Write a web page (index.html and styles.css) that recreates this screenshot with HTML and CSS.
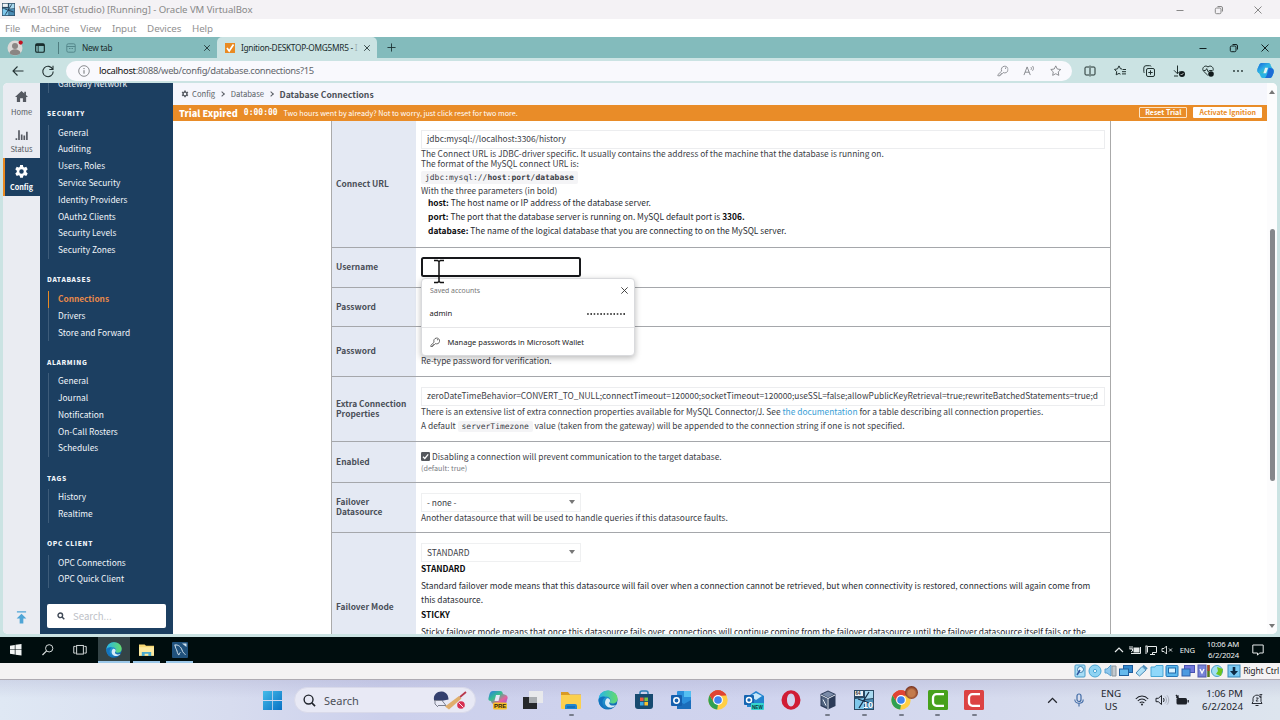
FILE: index.html
```html
<!DOCTYPE html>
<html lang="en">
<head>
<meta charset="utf-8">
<title>Win10LSBT (studio) [Running] - Oracle VM VirtualBox</title>
<link rel="stylesheet" href="styles.css">
</head>
<body>
<svg class="defs" aria-hidden="true">
  <defs>
    <linearGradient id="edgeA" x1="0" y1="0" x2="1" y2="1"><stop offset="0" stop-color="#2fb7e8"/><stop offset="1" stop-color="#0c59a4"/></linearGradient>
    <linearGradient id="edgeB" x1="0" y1="0" x2="1" y2="0"><stop offset="0" stop-color="#27b5e8"/><stop offset="1" stop-color="#66dc6b"/></linearGradient>
    <linearGradient id="cop" x1="0" y1="0" x2="1" y2="1"><stop offset="0" stop-color="#1664d8"/><stop offset=".5" stop-color="#2db0e6"/><stop offset="1" stop-color="#62cf66"/></linearGradient>
    <linearGradient id="copPre" x1="0" y1="0" x2="1" y2="1"><stop offset="0" stop-color="#2a7be4"/><stop offset=".4" stop-color="#37bf8e"/><stop offset=".7" stop-color="#e6629a"/><stop offset="1" stop-color="#8f55e0"/></linearGradient>
    <linearGradient id="win" x1="0" y1="0" x2="1" y2="1"><stop offset="0" stop-color="#44bce9"/><stop offset="1" stop-color="#0870c4"/></linearGradient>
    <symbol id="edge" viewBox="0 0 20 20">
      <circle cx="10" cy="10" r="9.6" fill="url(#edgeA)"/>
      <path d="M.6 9C1.200 3.800 5.200.4 10 .4c5.400 0 9.600 3.700 9.600 8 0 3-2.200 5-5 5-2 0-3-.8-2.600-1.700C13 10 12 6.500 8.300 6.500 4.800 6.500 1.500 7 .6 9z" fill="url(#edgeB)"/>
      <path d="M8.500 8.800c-2.800 3.200-1.500 8.200 3.200 8.800 2.600.2 4.800-.7 6.400-2.600-3 1.200-6 .5-6.800-1.300-.5-1.300 1-1.600.8-3.300-.2-1.500-2-2.900-3.600-1.600z" fill="#d9ecf7"/>
      <path d="M7.800 7.200C3.500 8.500 3 15.500 8.800 19.500 3.500 19 .2 14 .6 9.500 2 6.500 5 6 7.800 7.200z" fill="#1273bf"/>
    </symbol>
    <symbol id="chrome" viewBox="0 0 20 20">
      <circle cx="10" cy="10" r="9.700" fill="#ffcf45"/>
      <path d="M1.600 5.200A9.700 9.700 0 0 1 18.400 5.200H10z" fill="#e04434"/>
      <path d="M1.600 5.200 6 12.500 10 14.500 9.200 19.600A9.700 9.700 0 0 1 1.600 5.200z" fill="#2fa052"/>
      <path d="M1.600 5.200 6 12.500 9 6 18.400 5.200A9.700 9.700 0 0 0 1.600 5.200z" fill="#e04434"/>
      <circle cx="10" cy="10" r="4.900" fill="#fff"/><circle cx="10" cy="10" r="3.800" fill="#4084ee"/>
    </symbol>
    <symbol id="folder" viewBox="0 0 20 20">
      <path d="M0 2h7l2 2.500h11V8H0z" fill="#d99b24"/><path d="M0 5h20v13a1 1 0 0 1-1 1H1a1 1 0 0 1-1-1z" fill="#fbd04f"/>
      <path d="M4 19v-3a2 2 0 0 1 2-2h8a2 2 0 0 1 2 2v3z" fill="#1f86cf"/><path d="M6 17h8" stroke="#0b5aa0" stroke-width="1"/>
    </symbol>
    <symbol id="vm10" viewBox="0 0 20 20">
      <rect width="20" height="20" fill="#2b4a63"/><path d="M1 9 10 8v11H1z" fill="#7ec7ea"/><path d="M11 1h8v7l-8 1z" fill="#a9daf0"/><path d="M11 10l8-1v10h-8z" fill="#4a8db5"/>
      <rect x="1" y="1" width="8" height="5" fill="#eef2f5"/><path d="M5 18 15 2M4 9l14 5" stroke="#18304a" stroke-width="1.300"/>
    </symbol>
    <symbol id="dolphin" viewBox="0 0 16 16">
      <rect width="16" height="16" rx="1" fill="#20517c"/><path d="M2.500 3c4-.6 6.500 2 7.500 5 .8 2.500 2 3.500 3.500 4.500M3 3c.4 3.500 1.500 4 2 6s.8 3.500 2 4c0-2 .8-2.500 1.500-2.500" fill="none" stroke="#d4e4ee" stroke-width="1"/><path d="M10 1.500 14.500 5V1.500z" fill="#cfe2ee"/>
    </symbol>
    <symbol id="key" viewBox="0 0 12 12"><path d="M4.900 6.300 1 10v1.500h2V10.300h1.300V9h1.300l.9-1.100A3.500 3.500 0 1 0 4.900 6.300z" fill="none" stroke="currentColor" stroke-width=".8" stroke-linejoin="round"/><circle cx="8.900" cy="3.300" r=".6" fill="currentColor"/></symbol>
    <symbol id="x" viewBox="0 0 10 10"><path d="M1.500 1.500l7 7M8.500 1.500l-7 7" stroke="currentColor" fill="none" stroke-width="1"/></symbol>
    <symbol id="min" viewBox="0 0 10 10"><path d="M1.500 5.500h7" stroke="currentColor" stroke-width="1"/></symbol>
    <symbol id="restore" viewBox="0 0 10 10"><rect x="1.300" y="3" width="5.700" height="5.700" rx="1.300" fill="none" stroke="currentColor"/><path d="M3.500 1.500H7A1.500 1.500 0 0 1 8.500 3v3.500" fill="none" stroke="currentColor"/></symbol>
    <symbol id="gear" viewBox="0 0 16 16"><path fill="currentColor" fill-rule="evenodd" d="M6.500 1h3l.4 2.100 1.200.7 2-.8 1.500 2.600-1.600 1.500v1.500l1.600 1.500-1.500 2.600-2-.8-1.200.7-.4 2.100h-3l-.4-2.100-1.200-.7-2 .8-1.500-2.600L3 8.600V7.100L1.400 5.600 2.900 3l2 .8 1.200-.7zM8 5.500a2.400 2.400 0 1 0 0 4.800 2.400 2.400 0 0 0 0-4.800z"/></symbol>
    <symbol id="camt" viewBox="0 0 20 20"><rect width="20" height="20" rx="1.500" fill="currentColor"/><path d="M16 4.200H8.500A3.500 3.500 0 0 0 5 7.700v4.600a3.500 3.500 0 0 0 3.500 3.500H16" fill="none" stroke="#fff" stroke-width="2.300"/></symbol>
  </defs>
</svg>

<div class="screen">
  <header class="vb-title">
    <svg class="i14"><use href="#vm10"/></svg>
    <span class="vb-name">Win10LSBT (studio) [Running] - Oracle VM VirtualBox</span>
    <span class="vb-ctl"><svg><use href="#min"/></svg><svg><use href="#restore"/></svg><svg><use href="#x"/></svg></span>
  </header>
  <nav class="vb-menu"><span>File</span><span>Machine</span><span>View</span><span>Input</span><span>Devices</span><span>Help</span></nav>

  <div class="tabs">
    <div class="tabs-left">
      <svg class="avatar" viewBox="0 0 18 16"><circle cx="8" cy="8" r="7.500" fill="#dcd9d7"/><circle cx="8" cy="6" r="3" fill="#8a8583"/><path d="M2.500 13c1-5 10-5 11 0-2 3-9 3-11 0z" fill="#8a8583"/><circle cx="13.700" cy="2.600" r="2.100" fill="#c11322"/></svg>
      <svg class="wsp" viewBox="0 0 10 10"><rect x=".7" y=".7" width="8.600" height="8.600" rx="1.300" fill="none" stroke="#122" stroke-width="1.100"/><path d="M1 2h8" stroke="#122" stroke-width="1.800"/><path d="M3.200 3v6" stroke="#122" stroke-width=".8"/></svg>
      <i class="bar"></i>
    </div>
    <div class="tab"><svg class="i10" viewBox="0 0 10 10"><rect x=".8" y=".8" width="8.400" height="8.400" rx="1.500" fill="none" stroke="#54878b"/><path d="M.8 3.500h8.400M3 5.500h1.500M5.500 5.500H7" stroke="#54878b"/></svg><span>New tab</span><svg class="tx"><use href="#x"/></svg></div>
    <div class="tab on"><svg class="i10b" viewBox="0 0 10 10"><rect width="10" height="10" fill="#e98a22"/><path d="M2 5l2.200 3L8.500 1.500" fill="none" stroke="#fff" stroke-width="1.700"/></svg><span>Ignition-DESKTOP-OMG5MR5 - <em>I</em></span><svg class="tx"><use href="#x"/></svg></div>
    <svg class="plus" viewBox="0 0 10 10"><path d="M5 .5v9M.5 5h9" stroke="#1d3334"/></svg>
    <span class="win-ctl"><svg><use href="#min"/></svg><svg><use href="#restore"/></svg><svg><use href="#x"/></svg></span>
  </div>

  <div class="toolbar">
    <svg class="tb-back" viewBox="0 0 12 12"><path d="M11.500 6H1M5.500 1.500 1 6l4.500 4.500" fill="none" stroke="#243334" stroke-width="1.100"/></svg>
    <svg class="tb-reload" viewBox="0 0 12 12"><path d="M10.800 4.500A5.200 5.200 0 1 0 11.200 6.500M11 .8v3.700H7.300" fill="none" stroke="#243334" stroke-width="1.100"/></svg>
    <div class="address">
      <svg class="i12" viewBox="0 0 12 12"><circle cx="6" cy="6" r="5.300" fill="none" stroke="#6d7073" stroke-width=".8"/><path d="M6 5.200v3.500M6 3v1.100" stroke="#6d7073"/></svg>
      <span><b>localhost</b>:8088/web/config/database.connections?15</span>
      <div class="addr-icons">
        <svg viewBox="0 0 12 12"><use href="#key"/></svg>
        <svg viewBox="0 0 12 12"><path d="M1 10.500 4.300 2l3.300 8.500M2.200 7.500h4.200M8.200 2.200c.8.800.8 2 0 2.900M9.900 1c1.300 1.500 1.300 3.500 0 5" fill="none" stroke="currentColor" stroke-width=".85"/></svg>
        <svg viewBox="0 0 12 12"><path d="M6 .9l1.600 3.300 3.600.5-2.600 2.500.6 3.600L6 9.100l-3.200 1.700.6-3.600L.8 4.700l3.600-.5z" fill="none" stroke="currentColor" stroke-width=".85"/></svg>
      </div>
    </div>
    <div class="tb-icons">
      <svg viewBox="0 0 12 12"><path d="M5 2H2a1 1 0 0 0-1 1v6a1 1 0 0 0 1 1h3M7 2h3a1 1 0 0 1 1 1v6a1 1 0 0 1-1 1H7M6 .5v11" fill="none" stroke="currentColor"/></svg>
      <svg viewBox="0 0 12 12"><path d="M8 4 6.500 3.800 5 .9 3.500 3.900.5 4.400l2.200 2.200-.5 3.200L5 8.400l1.500.8M8.500 4.500H12M8 6.700h4M8 8.900h4" fill="none" stroke="currentColor"/></svg>
      <svg viewBox="0 0 12 12"><rect x="3.500" y="3.500" width="8" height="8" rx="1.500" fill="none" stroke="currentColor"/><path d="M1.500 8A2 2 0 0 1 .8 6.500V3A2.300 2.300 0 0 1 3 .7h3.700A2 2 0 0 1 8.300 1.500M7.500 5.300v4.400M5.300 7.500h4.400" fill="none" stroke="currentColor"/></svg>
      <svg viewBox="0 0 12 12"><path d="M4.500.5v8M1 5.300l3.500 3.500L7 6.300M1 11h4" fill="none" stroke="currentColor"/><circle cx="9" cy="9" r="3" fill="#101a1b"/><path d="M7.600 9l1 1L10.500 8" fill="none" stroke="#fff" stroke-width=".7"/></svg>
      <svg viewBox="0 0 12 12"><path d="M5.800 10.300 1.200 5.800C-.5 3 3.200-.7 6 2c2.800-2.700 6.500 1 4.800 3.800M1.500 5.500h2L4.700 3.600l1.500 3.200 1-1.300h3" fill="none" stroke="currentColor"/><circle cx="9" cy="9" r="2.800" fill="#101a1b"/></svg>
      <svg viewBox="0 0 12 12"><g fill="currentColor"><circle cx="2" cy="6" r=".9"/><circle cx="6" cy="6" r=".9"/><circle cx="10" cy="6" r=".9"/></g></svg>
    </div>
    <svg class="copilot" viewBox="0 0 16 16"><path d="M5 1h5.500c1.500 0 2 1 2.300 2L14.500 6c1.500 1 1.500 3 1 4.500l-1.200 3c-.5 1-1.300 1.500-2.300 1.500H5.500C4 15 3.500 14 3.200 13L2 10.500C.3 10 0 8 .6 6L2 3C2.700 1.500 3.500 1 5 1z" fill="#2bb3e4"/><path d="M5 1h5.500c1.500 0 2 1 2.300 2H10c-1.200 0-1.700.8-2 2L6.500 10.500H2C.3 10 0 8 .6 6L2 3C2.700 1.500 3.500 1 5 1z" fill="url(#cop)"/><path d="M11 5.500 9.600 11c-.4 1.500-1 2.500-2.100 4H12c1 0 1.800-.5 2.300-1.500l1.200-3c.5-1.500.5-3.500-1-4.500z" fill="#1c6cd6"/><path d="M7.600 5.300h2.800L8.600 10.500H6z" fill="#e4f3f4"/></svg>
  </div>

  <div class="viewport">
    <aside class="rail">
      <div class="rail-item"><svg viewBox="0 0 14 13"><path d="M7 .5 0 7h2v5.500h3.500v-4h3v4H12V7h2L11.800 5V1.500H10v1.800z" fill="#555961"/></svg><span>Home</span></div>
      <div class="rail-item"><svg viewBox="0 0 14 13"><path d="M1.500 12.500v-2M4.300 12.500V2M7.200 12.500V6.500M10 12.500V7.500M12.800 12.500V3.500" stroke="#555961" stroke-width="1.800" fill="none"/></svg><span>Status</span></div>
      <div class="rail-item on"><svg viewBox="0 0 16 16"><use href="#gear"/></svg><span>Config</span></div>
      <svg class="to-top" viewBox="0 0 12 14"><path d="M1 .8h10" stroke="#4fa5d6" stroke-width="1.500"/><path d="M6 2.800 11.300 8.200H8V13.500H4V8.200H.7z" fill="#4fa5d6"/></svg>
    </aside>
    <aside class="side">
      <div class="side-scroll">
        <ul class="first"><li>Gateway Network</li></ul>
        <h4>SECURITY</h4>
        <ul><li>General</li><li>Auditing</li><li>Users, Roles</li><li>Service Security</li><li>Identity Providers</li><li>OAuth2 Clients</li><li>Security Levels</li><li>Security Zones</li></ul>
        <h4>DATABASES</h4>
        <ul><li class="on">Connections</li><li>Drivers</li><li>Store and Forward</li></ul>
        <h4>ALARMING</h4>
        <ul><li>General</li><li>Journal</li><li>Notification</li><li>On-Call Rosters</li><li>Schedules</li></ul>
        <h4>TAGS</h4>
        <ul><li>History</li><li>Realtime</li></ul>
        <h4>OPC CLIENT</h4>
        <ul><li>OPC Connections</li><li>OPC Quick Client</li></ul>
      </div>
      <div class="side-search"><svg viewBox="0 0 8 8"><circle cx="3.300" cy="3.300" r="2.300" fill="none" stroke="#404a57" stroke-width="1.400"/><path d="M5 5l2.300 2.300" stroke="#404a57" stroke-width="1.500"/></svg><span>Search...</span></div>
    </aside>
    <main class="main">
      <div class="crumbs"><svg viewBox="0 0 16 16"><use href="#gear"/></svg><span>Config</span><i></i><span>Database</span><i></i><b>Database Connections</b></div>
      <div class="trial"><b class="t-exp">Trial Expired</b><b class="t-clock">0:00:00</b><span class="t-msg">Two hours went by already? Not to worry, just click reset for two more.</span><span class="btn ghost">Reset Trial</span><span class="btn">Activate Ignition</span></div>
      <div class="form">
        <div class="row r1"><div class="lab">Connect URL</div><div class="val">
          <div class="input wide">jdbc:mysql://localhost:3306/history</div>
          <p class="f1">The Connect URL is JDBC-driver specific. It usually contains the address of the machine that the database is running on.</p>
          <p>The format of the MySQL connect URL is:</p>
          <div class="codeline"><code>jdbc:mysql://<b>host</b>:<b>port</b>/<b>database</b></code></div>
          <p>With the three parameters (in bold)</p>
          <div class="dl"><div><b>host:</b> The host name or IP address of the database server.</div><div><b>port:</b> The port that the database server is running on. MySQL default port is <b>3306.</b></div><div><b>database:</b> The name of the logical database that you are connecting to on the MySQL server.</div></div>
        </div></div>
        <div class="row r2"><div class="lab">Username</div><div class="val">
          <div class="input focus"></div>
          <svg class="ibeam" viewBox="0 0 12 24"><path d="M1 1h3.500L6 2l1.500-1H11M6 2v20M1 23h3.500L6 22l1.500 1H11" fill="none" stroke="#111" stroke-width="1.500"/></svg>
          <div class="popup">
            <div class="pop-head"><span>Saved accounts</span><svg><use href="#x"/></svg></div>
            <div class="pop-acct"><span>admin</span><i class="dots"></i></div>
            <div class="pop-foot"><svg viewBox="0 0 12 12"><use href="#key"/></svg><span>Manage passwords in Microsoft Wallet</span></div>
          </div>
        </div></div>
        <div class="row r3"><div class="lab">Password</div><div class="val"></div></div>
        <div class="row r4"><div class="lab">Password</div><div class="val"><p class="retype">Re-type password for verification.</p></div></div>
        <div class="row r5"><div class="lab">Extra Connection Properties</div><div class="val">
          <div class="input wide extra">zeroDateTimeBehavior=CONVERT_TO_NULL;connectTimeout=120000;socketTimeout=120000;useSSL=false;allowPublicKeyRetrieval=true;rewriteBatchedStatements=true;d</div>
          <p class="l12">There is an extensive list of extra connection properties available for MySQL Connector/J. See <a>the documentation</a> for a table describing all connection properties.</p>
          <p class="l15">A default <code>serverTimezone</code> value (taken from the gateway) will be appended to the connection string if one is not specified.</p>
        </div></div>
        <div class="row r6"><div class="lab">Enabled</div><div class="val">
          <div class="check"><svg viewBox="0 0 9 9"><rect width="9" height="9" rx="1.200" fill="#55585d"/><path d="M2 4.700 3.800 6.500 7.200 2.400" fill="none" stroke="#fff" stroke-width="1.300"/></svg><span>Disabling a connection will prevent communication to the target database.</span></div>
          <small>(default: true)</small>
        </div></div>
        <div class="row r7"><div class="lab">Failover Datasource</div><div class="val">
          <div class="select"><span>- none -</span><i></i></div>
          <p class="l12">Another datasource that will be used to handle queries if this datasource faults.</p>
        </div></div>
        <div class="row r8"><div class="lab">Failover Mode</div><div class="val">
          <div class="select"><span>STANDARD</span><i></i></div>
          <div class="dl2"><b>STANDARD</b><div class="desc">Standard failover mode means that this datasource will fail over when a connection cannot be retrieved, but when connectivity is restored, connections will again come from<br>this datasource.</div><b>STICKY</b><div class="desc">Sticky failover mode means that once this datasource fails over, connections will continue coming from the failover datasource until the failover datasource itself fails or the</div></div>
        </div></div>
      </div>
    </main>
    <div class="scroll"><i class="up"></i><i class="thumb"></i><i class="down"></i></div>
  </div>

  <div class="tb10">
    <div class="c10"><svg viewBox="0 0 12 12"><path d="M0 1.700 5 1v4.700H0zM5.700.9 12 0v5.700H5.700zM0 6.300h5V11L0 10.300zM5.700 6.300H12V12l-6.300-.9z" fill="#f2f5f5"/></svg></div>
    <div class="c10"><svg viewBox="0 0 12 12"><circle cx="7.500" cy="4.500" r="3.800" fill="none" stroke="#dfe4e4"/><path d="M4.800 7.200.5 11.500" stroke="#dfe4e4" stroke-width="1.200"/></svg></div>
    <div class="c10"><svg class="tv" viewBox="0 0 14 12"><rect x="3.500" y="1.500" width="7" height="9" fill="none" stroke="#dfe4e4"/><path d="M2.500 2.500h-2v7h2M11.500 2.500h2v7h-2" fill="none" stroke="#dfe4e4"/></svg></div>
    <div class="c10 act"><svg class="big"><use href="#edge"/></svg></div>
    <div class="c10 run"><svg class="big f" viewBox="0 0 16 14"><path d="M0 1h6l1.500 1.500H16V13H0z" fill="#f6d774"/><path d="M0 4h16v9H0z" fill="#fce9a0"/><path d="M3 13.500V9h10v4.500h-3V11H6v2.500z" fill="#49aad0"/></svg></div>
    <div class="c10 run"><svg class="big"><use href="#dolphin"/></svg></div>
    <div class="tray10">
      <svg viewBox="0 0 12 12"><path d="M2 8l4-4 4 4" fill="none" stroke="#e6eaea" stroke-width="1.200"/></svg>
      <svg viewBox="0 0 12 12"><path d="M1 2v3M3 2v3M.5 5h3v2l-1.500 1" stroke="#e6eaea" fill="none"/><rect x="4.500" y="3.500" width="6" height="5" fill="#e6eaea"/><path d="M11.500 5v2M2 9.500h9.500V3" stroke="#e6eaea" fill="none"/></svg>
      <svg viewBox="0 0 12 12"><path d="M2.500 8.500V2.500h9v6h-4v2M5 10.500h5M.5 2h2M1 2v8" fill="none" stroke="#e6eaea"/></svg>
      <svg viewBox="0 0 12 12"><path d="M1 4.500h2L5.500 2v8L3 7.500H1zM8 4.500l3 3M11 4.500l-3 3" fill="none" stroke="#e6eaea" stroke-width=".9"/></svg>
      <span class="eng10">ENG</span>
      <span class="clk10">10:06 AM<br>6/2/2024</span>
      <svg class="note10" viewBox="0 0 12 12"><path d="M.8 1h10.400v8H7.500L5.500 11.200V9H.8z" fill="none" stroke="#e6eaea"/></svg>
    </div>
  </div>

  <div class="vb-status">
    <svg viewBox="0 0 14 14"><rect x="2" y="1" width="10" height="12" rx="1" fill="#a8ddf5" stroke="#4a9cc8"/><circle cx="7.500" cy="5.500" r="3" fill="#e8f7ff" stroke="#3c7fb0"/><path d="M7 6 4 11" stroke="#3056a0" stroke-width="1.500"/></svg>
    <svg viewBox="0 0 14 14"><circle cx="7" cy="7" r="6" fill="#8fd3f3" stroke="#4ba6d4"/><circle cx="7" cy="7" r="1.600" fill="#fff" stroke="#4ba6d4"/></svg>
    <svg viewBox="0 0 14 14"><path d="M1 5h2l4-4v11L3 9H1z" fill="#8fc8ee" stroke="#5a9fce"/><path d="M8 2h4v10H8z" fill="#c3c9ce" stroke="#8c959c"/></svg>
    <svg viewBox="0 0 14 14"><rect x="4.500" y="1.500" width="9" height="7" fill="#348bd0" stroke="#1e5d9e"/><rect x=".5" y="5" width="9" height="6.500" fill="#65b9ec" stroke="#215f9c"/></svg>
    <svg viewBox="0 0 14 14"><path d="M2 9 8 2.500 12 6 5.500 12z" fill="#aee0f7" stroke="#4b8bb8"/><path d="M9 1.500 13 5" stroke="#4b8bb8" stroke-width="2"/></svg>
    <svg viewBox="0 0 14 14"><path d="M1 3h4l1-1.500h7V12.500H1z" fill="#8fd8fa" stroke="#48a6d4"/></svg>
    <svg viewBox="0 0 14 14"><rect x="1" y="1.500" width="12" height="11" rx="1" fill="#5bb9ee" stroke="#2777b8"/><rect x="3.500" y="4" width="7" height="5" fill="#d8f2ff" stroke="#2169a8"/></svg>
    <svg viewBox="0 0 14 14"><rect x="3.500" y="1.500" width="10" height="7" fill="#7178db" stroke="#4850b0"/><rect x="1" y="5" width="8" height="7" fill="#4d9be0" stroke="#305fa8"/></svg>
    <svg viewBox="0 0 14 14"><rect x="2" y="1" width="8" height="12" fill="#7783d8" stroke="#5159ac"/><path d="M4 5l2 4 2-4" stroke="#fff" fill="none" stroke-width="1.300"/><path d="M12.500 1v12" stroke="#52791c" stroke-width="2.500"/><path d="M12.500 1v6" stroke="#b33d28" stroke-width="2"/></svg>
    <svg viewBox="0 0 14 14"><circle cx="6" cy="7" r="5.500" fill="#a2dff2" stroke="#4ca1c8"/><path d="M6 3l6 2-2 7-5-2 2-3z" fill="#6bc51f"/></svg>
    <svg viewBox="0 0 14 14"><rect x="1" y="1" width="12" height="12" fill="#79c9f3" stroke="#3b87b8"/><path d="M5.700 3h2.600v4H11l-4 4.500L3 7h2.700z" fill="#0e2a44"/></svg>
    <span>Right Ctrl</span>
  </div>

  <footer class="tb11">
    <svg class="start" viewBox="0 0 20 20"><path d="M0 0h9.600v9.600H0zM10.400 0H20v9.600h-9.600zM0 10.400h9.600V20H0zM10.400 10.400H20V20h-9.600z" fill="url(#win)"/></svg>
    <div class="search11">
      <svg class="mag" viewBox="0 0 14 14"><circle cx="6" cy="6" r="4.800" fill="none" stroke="#20242c" stroke-width="1.500"/><path d="M9.500 9.500 13 13" stroke="#20242c" stroke-width="1.700"/></svg>
      <span>Search</span>
      <svg class="cricket" viewBox="0 0 36 20"><path d="M2 10C1 4 6 1 10 1.500c4.500.5 6.500 4 6.500 8L9 11z" fill="#34406e"/><path d="M2 10.500h8l4 5H6M3 11v3l3 3" fill="none" stroke="#7d8190"/><path d="M13 16.500 27 6l2.500 2.500L17 19.500z" fill="#e0ae6d"/><path d="M28 7 34 2" stroke="#b8384b" stroke-width="1.800"/><circle cx="29" cy="15" r="3.800" fill="#d72f52"/><path d="M26.500 12.500l5 5" stroke="#fff" stroke-width=".9"/></svg>
    </div>
    <div class="apps">
      <div class="app"><svg viewBox="0 0 20 20"><path d="M5 1h7c2 0 2.500 1 3 3l3 1c2 1 2 3 1 5l-1 4H6c-2 0-2.500-1-3-3-2-.3-3-1-2.500-3l1-4C2.300 2 3 1 5 1z" fill="url(#copPre)"/><path d="M8 5h4l-1.500 6h-4z" fill="#e6e8f6"/><rect x="5" y="12.500" width="14" height="7" rx="1.500" fill="#f6c12c"/><text x="6" y="18.200" class="pre">PRE</text></svg></div>
      <div class="app back"><svg viewBox="0 0 20 20"><rect x="6" y="1" width="14" height="12" fill="#e8e9ec"/><rect x="0" y="7" width="14" height="12" fill="#26282b"/><rect x="6" y="7" width="8" height="6" fill="#aaaeb2"/></svg></div>
      <div class="app run"><svg><use href="#folder"/></svg></div>
      <div class="app"><svg><use href="#edge"/></svg></div>
      <div class="app"><svg viewBox="0 0 20 20"><path d="M6 5V3a2 2 0 0 1 2-2h4a2 2 0 0 1 2 2v2" fill="none" stroke="#2b7db5" stroke-width="1.500"/><path d="M1 4h18v12a3 3 0 0 1-3 3H4a3 3 0 0 1-3-3z" fill="#174a70"/><path d="M6 7.500h3.600v3.600H6z" fill="#ef5a3c"/><path d="M10.400 7.500H14v3.600h-3.600z" fill="#7dc243"/><path d="M6 11.900h3.600v3.600H6z" fill="#39a9e4"/><path d="M10.400 11.900H14v3.600h-3.600z" fill="#f9c22e"/></svg></div>
      <div class="app"><svg viewBox="0 0 20 20"><rect x="6" y="1" width="14" height="18" rx="1" fill="#2a8fdc"/><path d="M13 1h7v6h-7z" fill="#53bff2"/><path d="M6 10l7 4 7-4v9H6z" fill="#1b6dbb"/><rect y="5" width="11" height="11" rx="1" fill="#155fae"/><circle cx="5.500" cy="10.500" r="2.700" fill="none" stroke="#fff" stroke-width="1.500"/></svg></div>
      <div class="app"><svg><use href="#chrome"/></svg></div>
      <div class="app"><svg viewBox="0 0 20 20"><path d="M3 7 12 1l8 5v11H3z" fill="#2384cf"/><path d="M6 6l6-3 6 3-6 4z" fill="#c8e8fa"/><rect y="5" width="10" height="10" rx="1" fill="#1464b1"/><circle cx="5" cy="10" r="2.500" fill="none" stroke="#fff" stroke-width="1.500"/><rect x="7" y="13" width="13" height="7" rx="1" fill="#35d4cf"/><text x="8" y="18.500" class="new">NEW</text></svg></div>
      <div class="app"><svg viewBox="0 0 20 20"><path fill-rule="evenodd" d="M10 .3a9.500 9.700 0 1 0 0 19.400A9.500 9.700 0 0 0 10 .3zM10 3.600c2.400 0 4 2.800 4 6.400s-1.600 6.400-4 6.400S6 13.600 6 10s1.600-6.400 4-6.400z" fill="#d01d35"/></svg></div>
      <div class="app run"><svg viewBox="0 0 20 20"><path d="M10 .5 17.500 4v12L10 19.500 2.500 16V4z" fill="#2b3a57"/><path d="M10 1.500 16 4.300 10 7.500 4 4.300z" fill="#7a8ba8"/><path d="M3.500 6 9 9v8.500L3.500 15z" fill="#51637f"/><path d="M5 9.500l3 6M3 5l7 3.500L17 5M10 8.500V19" stroke="#e7edf5" stroke-width="1" fill="none"/></svg></div>
      <div class="app run"><svg viewBox="0 0 20 20"><use href="#vm10"/><text x="9" y="17.500" class="ten">10</text><text x="1.500" y="5.300" class="sf">64</text></svg></div>
      <div class="app run"><svg viewBox="0 0 20 20"><use href="#chrome"/></svg><i class="face"></i></div>
      <div class="app run green"><svg><use href="#camt"/></svg></div>
      <div class="app run red"><svg><use href="#camt"/></svg></div>
    </div>
    <div class="tray11">
      <svg class="chev" viewBox="0 0 12 12"><path d="M2 8l4-4 4 4" fill="none" stroke="#23262d" stroke-width="1.200"/></svg>
      <svg class="mic" viewBox="0 0 12 14"><rect x="4" y="1" width="4" height="7.500" rx="2" fill="none" stroke="#3f6aa5" stroke-width="1.200"/><path d="M1.800 6.500c0 5 8.400 5 8.400 0M6 10.500v3" fill="none" stroke="#3f6aa5" stroke-width="1.100"/></svg>
      <span class="eng11">ENG<br>US</span>
      <svg class="wifi" viewBox="0 0 14 12"><path d="M.8 5c3.500-4 8.900-4 12.400 0M2.800 7c2.400-2.600 6-2.600 8.400 0M4.700 9c1.300-1.400 3.300-1.400 4.600 0" fill="none" stroke="#1e2229" stroke-width="1.100"/><circle cx="7" cy="10.500" r="1" fill="#1e2229"/></svg>
      <svg class="spk" viewBox="0 0 14 12"><path d="M1 4.300h2.300L6.500 1.500v9L3.300 7.700H1zM8.300 4c1 1 1 3 0 4" fill="none" stroke="#1e2229"/><path d="M10 2.500c2 2 2 5 0 7M12 1.300c2.300 3 2.300 6.400 0 9.400" fill="none" stroke="#9aa0ac" stroke-width=".8"/></svg>
      <svg class="bat" viewBox="0 0 14 12"><rect x="1.500" y="4" width="10.500" height="6.500" rx="1.500" fill="#1e2229"/><path d="M13.200 6v2.500M1 1l3 4M3.500 1.500 1.500 4" stroke="#1e2229" stroke-width="1.300"/></svg>
      <span class="clk11">1:06 PM<br>6/2/2024</span>
      <svg class="bell" viewBox="0 0 12 14"><path d="M1 10.500h10l-1-2V5.500C9.500 1 2.500 1 2 5.500v3zM4.500 12.500h3" fill="none" stroke="#2a2e36"/><path d="M5 5h2.300L5 8h2.300M8.500 1.500h2.500L8.500 4H11" fill="none" stroke="#2a2e36" stroke-width=".9"/></svg>
    </div>
  </footer>
</div>
</body>
</html>
```

FILE: styles.css
```css
* { box-sizing: border-box; }
body { margin: 0; width: 1280px; height: 720px; overflow: hidden; font-family: "Noto Sans", "Open Sans", sans-serif; color: #333; }
svg { display: block; flex: none; overflow: visible; }
.defs { position: absolute; width: 0; height: 0; }
p, h4, ul { margin: 0; padding: 0; list-style: none; font-weight: normal; }
span, b { white-space: nowrap; }
.screen { display: flex; flex-direction: column; width: 1280px; height: 720px; background: #cbe3e3; }

.vb-title { height: 19px; background: #f4f2f5; display: flex; align-items: center; padding: 0 0 0 2px; color: #888; }
.i14 { width: 13px; height: 13px; }
.vb-name { margin-left: 4px; font-size: 9.600px; line-height: 18px; letter-spacing: -.06px; }
.vb-ctl { margin-left: auto; display: flex; gap: 29px; padding-right: 17px; color: #888; }
.vb-ctl svg, .win-ctl svg { width: 10px; height: 10px; }
.vb-menu { height: 18px; background: #fff; display: flex; padding-left: 5px; font-size: 9.800px; letter-spacing: -.1px; line-height: 19px; color: #919191; gap: 10.700px; }

.tabs { height: 21px; background: #83bbbc; display: flex; align-items: center; }
.tabs-left { width: 59px; display: flex; align-items: center; padding-left: 7px; }
.avatar { width: 18px; height: 16px; }
.wsp { width: 10px; height: 10px; margin-left: 10px; }
.bar { width: 1px; height: 12px; background: #4f7d80; margin-left: 13px; }
.tab { width: 158px; height: 21px; display: flex; align-items: center; padding-left: 7px; font-size: 8.300px; letter-spacing: -.28px; color: #1a2c2d; }
.tab span { margin-left: 6px; }
.tab .tx { width: 8px; height: 8px; margin-left: auto; margin-right: 6px; color: #142526; }
.i10, .i10b { width: 10px; height: 10px; }
.tab.on { width: 160px; background: #cbe3e3; border-radius: 5px 5px 0 0; padding-left: 8px; }
.tab.on em { font-style: normal; color: #9fb2b3; }
.plus { width: 9px; height: 9px; margin-left: 10px; }
.win-ctl { margin-left: auto; display: flex; gap: 21px; padding-right: 10px; color: #111f20; }

.toolbar { height: 25px; display: flex; align-items: center; }
.tb-back { width: 12px; height: 12px; margin-left: 12px; }
.tb-reload { width: 12px; height: 12px; margin-left: 18px; }
.address { width: 1006px; height: 20px; margin-left: 12px; border-radius: 10px; background: #f9f9fd; display: flex; align-items: center; padding-left: 12px; font-size: 9.400px; letter-spacing: -.33px; color: #63666b; }
.address b { font-weight: normal; color: #111; }
.address span { margin-left: 9px; }
.i12 { width: 12px; height: 12px; }
.addr-icons { margin-left: auto; display: flex; gap: 15px; padding-right: 11px; color: #75777c; }
.addr-icons svg { width: 11.500px; height: 11.500px; }
.tb-icons { display: flex; gap: 17.500px; margin-left: 12px; color: #20302f; }
.tb-icons svg { width: 12px; height: 12px; }
.copilot { width: 17px; height: 17px; margin-left: 13px; }

.viewport { height: 551px; margin: 0 3px; display: flex; background: #fff; border-radius: 5px; overflow: hidden; font-family: "Noto Sans CJK JP", "Noto Sans", sans-serif; }
.rail { width: 37px; background: #eaecf2; display: flex; flex-direction: column; font-size: 7.500px; color: #555961; }
.rail-item { height: 37.500px; display: flex; flex-direction: column; align-items: center; padding-top: 7px; }
.rail-item svg { width: 13px; height: 13px; }
.rail-item span { line-height: 10px; margin-top: 3.500px; }
.rail-item.on { background: #1c3f61; color: #fff; font-weight: bold; border-left: 2px solid #e98a22; padding-right: 2px; font-size: 7.200px; }
.rail-item.on svg { width: 15px; height: 15px; margin-top: -1px; margin-bottom: -1px; }
.to-top { width: 11px; height: 13px; margin: auto auto 10px 13px; }
.side { width: 133px; background: #1c3f61; color: #f1f5fa; display: flex; flex-direction: column; }
.side-scroll { height: 521px; padding-left: 7px; overflow: hidden; }
.side h4 { height: 12px; line-height: 11.500px; font-size: 6.600px; font-weight: 900; letter-spacing: .65px; margin-bottom: 4.500px; }
.side ul { margin: 0 0 15.400px 1px; border-left: 1px solid #3d5c7a; padding-left: 9px; font-size: 8.400px; font-weight: 400; }
.side ul.first { margin-top: -7px; }
.side li { height: 16.800px; line-height: 15.500px; }
.side li.on { color: #e8894a; font-weight: bold; font-size: 8.300px; position: relative; }
.side li.on::before { content: ""; position: absolute; left: -10px; top: 0; width: 1px; height: 17px; background: #e98a22; }
.side-search { margin: 0 7px; height: 24px; background: #fff; border-radius: 2px; display: flex; align-items: center; padding-left: 10px; gap: 8px; font-size: 9.600px; color: #bcc0c6; }
.side-search svg { width: 8px; height: 8px; }

.main { width: 1094px; display: flex; flex-direction: column; }
.crumbs { height: 22px; background: #f5f6fc; display: flex; align-items: center; padding-left: 8px; padding-bottom: 1px; font-size: 7.700px; color: #5a5e66; }
.crumbs svg { width: 8px; height: 8px; margin-right: 3px; }
.crumbs b { font-size: 8.600px; color: #4b4f57; }
.crumbs i { width: 4px; height: 4px; border: solid #5a5e66; border-width: 1px 1px 0 0; transform: rotate(45deg); margin: 0 7px 0 4.500px; }
.trial { height: 16px; background: #e98c28; color: #fff; display: flex; align-items: center; padding: 0 5px 1px 6px; }
.t-exp { font-size: 9.200px; font-weight: 900; }
.t-clock { font-family: "DejaVu Sans Mono", monospace; font-size: 8px; margin-left: 6px; }
.t-msg { font-size: 7.200px; margin-left: 6px; }
.btn { height: 11px; line-height: 10px; font-size: 7px; font-weight: bold; padding: 0 6px; background: #fff; color: #e98c28; border-radius: 1px; margin-left: 6px; }
.btn.ghost { margin-left: auto; background: none; color: #fff; border: 1px solid #fbe3c5; padding: 0 5px; line-height: 8.500px; }

.form { margin-left: 158px; width: 780px; height: 513px; overflow: hidden; border-left: 1px solid #aaa; border-right: 1px solid #aaa; font-size: 8.400px; color: #3c4046; }
.row { display: flex; border-bottom: 1px solid #a5a7ab; }
.row p, .dl div { white-space: nowrap; }
.lab { width: 84px; background: #e4e9f3; padding: 0 4px 3px; display: flex; align-items: center; font-weight: bold; font-size: 8.400px; line-height: 10px; color: #4a4f58; }
.val { width: 694px; padding-left: 5px; position: relative; }
.r1 { height: 127px; } .r2 { height: 40px; } .r3 { height: 39px; } .r4 { height: 50px; } .r5 { height: 65px; } .r6 { height: 41px; } .r7 { height: 50px; } .r8 { height: 150px; }
.r1 .val { padding-top: 9px; } .r2 .val { padding-top: 9px; } .r4 .val { padding-top: 28px; } .r5 .val { padding-top: 9.500px; } .r6 .val { padding-top: 7.500px; } .r7 .val, .r8 .val { padding-top: 9.500px; }
.input { border: 1px solid #ecedef; height: 19px; line-height: 15.500px; padding-left: 5px; white-space: nowrap; overflow: hidden; background: #fff; }
.input.wide { width: 684px; padding-right: 5px; }
.input.extra { padding-right: 0; }
.input.focus { width: 160px; height: 20px; border: 2px solid #17181b; border-radius: 2.500px; }
.row p { line-height: 10px; height: 10px; }
.row p.f1 { margin-top: -1px; }
.codeline { height: 17px; display: flex; align-items: center; padding-top: 1px; }
code { font-family: "DejaVu Sans Mono", monospace; font-size: 7.980px; background: #f4f4f6; border-radius: 2px; padding: 1px 4px; line-height: 11px; }
.dl { padding-left: 7px; }
.dl div { height: 14px; line-height: 14px; color: #2a2d33; }
.dl b, .dl2 b { color: #0c0c0e; }
.row p.l12 { height: 13px; line-height: 11px; }
.row p.l15 { height: 15px; line-height: 12px; }
a { color: #3ba0d6; }
.check { display: flex; align-items: center; gap: 2px; height: 13px; line-height: 13px; }
.check svg { width: 9px; height: 9px; margin-top: 1px; }
small { display: block; font-size: 7.200px; line-height: 11px; color: #777b82; }
.select { width: 160px; height: 19px; border: 1px solid #eff0f1; display: flex; align-items: center; justify-content: space-between; padding: 0 5px 1px; }
.select i { border: 3px solid transparent; border-top: 4px solid #777; border-bottom: 0; }
.dl2 { display: flex; flex-direction: column; }
.dl2 b { height: 12px; line-height: 12px; }
.desc { line-height: 14px; padding: 4px 0 2px; color: #2a2d33; white-space: nowrap; }
.ibeam { position: absolute; left: 17px; top: 11px; width: 12px; height: 25px; z-index: 3; }
.popup { position: absolute; left: 4.500px; top: 30px; width: 214px; height: 78px; background: #fff; border: 1px solid #d9dadd; border-radius: 4px; box-shadow: 0 2px 6px rgba(0,0,0,.28); z-index: 2; font-family: "Noto Sans", sans-serif; display: flex; flex-direction: column; color: #222; }
.pop-head { height: 23px; display: flex; align-items: center; justify-content: space-between; padding: 0 5px 0 8.500px; font-size: 6.900px; color: #777; }
.pop-head svg { width: 9px; height: 9px; color: #333; }
.pop-acct { height: 26px; display: flex; align-items: center; justify-content: space-between; padding: 0 8px 3px; font-size: 7.600px; border-bottom: 1px solid #e6e6e8; }
.dots { width: 39px; height: 2px; margin-top: 2px; background: radial-gradient(circle at 1px 1px, #444 .7px, transparent 1px) 0 0 / 3.300px 2px; }
.pop-foot { height: 27px; display: flex; align-items: center; gap: 8px; padding-left: 8px; font-size: 7.560px; }
.pop-foot svg { width: 10px; height: 10px; }

.scroll { width: 10px; display: flex; flex-direction: column; align-items: center; background: #fcfcfd; padding: 7px 0 6px; }
.scroll .up { border: 3px solid transparent; border-bottom: 4px solid #777; border-top: 0; }
.scroll .down { border: 3px solid transparent; border-top: 4px solid #777; border-bottom: 0; margin-top: auto; }
.scroll .thumb { width: 5px; height: 252px; margin-top: 135px; background: #85878b; border-radius: 3px; }

.tb10 { height: 26px; margin-top: 3px; background: #000d0e; display: flex; }
.c10 { width: 32px; display: flex; align-items: center; justify-content: center; }
.c10 svg { width: 11.500px; height: 11.500px; }
.c10 svg.tv { width: 14px; }
.c10 svg.big { width: 16px; height: 16px; }
.c10 svg.big.f { width: 15px; height: 14px; }
.c10.act { background: #344346; margin-left: 2px; border-bottom: 2px solid #9cc8ea; }
.c10.act svg { margin-top: 2px; }
.c10.run { width: 27px; margin: 0 3px; border-bottom: 2px solid #9cc8ea; }
.c10.run svg { margin-top: 2px; }
.tray10 { margin-left: auto; display: flex; align-items: center; gap: 4px; color: #eef2f2; font-size: 7.700px; letter-spacing: -.15px; padding-right: 16px; }
.tray10 svg { width: 12px; height: 12px; }
.eng10 { margin-left: 3px; }
.clk10 { width: 40px; text-align: right; line-height: 11.500px; }
.tray10 .note10 { margin-left: 9px; }

.vb-status { height: 17px; background: #f4f2f3; border-bottom: 1px solid #aeaab2; display: flex; align-items: center; justify-content: flex-end; gap: 1.400px; color: #222; font-size: 8.600px; letter-spacing: -.2px; padding-right: 1px; }
.vb-status svg { width: 14px; height: 14px; }
.vb-status span { margin-left: 1px; }

.tb11 { height: 40px; background: linear-gradient(rgba(150,150,190,.22), rgba(255,255,255,0) 45%), linear-gradient(90deg, #dfe8f4 0, #d7dcef 18%, #ccd0ec 30%, #d0d4ee 60%, #d6dbee 78%, #dde5ee 100%); display: flex; align-items: center; }
.start { width: 19px; height: 19px; margin-left: 263px; }
.search11 { width: 182px; height: 26px; margin-left: 12px; border-radius: 13px; background: #e8e9f5; border: 1px solid #d9daea; display: flex; align-items: center; padding: 0 7px 0 8px; color: #4c5059; font-size: 11px; }
.mag { width: 13px; height: 13px; }
.search11 span { margin-left: 8px; }
.cricket { width: 36px; height: 20px; margin-left: auto; }
.apps { display: flex; margin-left: 3.500px; height: 40px; }
.app { width: 36.650px; display: flex; align-items: center; justify-content: center; position: relative; }
.app svg { width: 20px; height: 20px; }
.app.back { padding-right: 3px; }
.app.run::after { content: ""; position: absolute; bottom: 4px; left: 16px; width: 5px; height: 2.500px; border-radius: 1.200px; background: #777d8c; }
.green { color: #47a11b; } .red { color: #dc4343; }
.face { position: absolute; right: 1px; top: 6px; width: 13px; height: 13px; border-radius: 50%; background: radial-gradient(circle at 50% 55%, #c47b4d 35%, #6d2617 75%); }
.pre { font: bold 6px "Liberation Sans", sans-serif; fill: #2c2210; }
.new { font: bold 4.600px "Liberation Sans", sans-serif; fill: #06373a; }
.ten { font: bold 9px "Liberation Sans", sans-serif; fill: #fff; }
.sf { font: bold 4.500px "Liberation Sans", sans-serif; fill: #333; }
.tray11 { margin-left: auto; width: 244px; display: flex; align-items: center; color: #23262d; font-size: 9.800px; line-height: 13px; padding-left: 10px; }
.chev { width: 13px; height: 13px; }
.mic { width: 12px; height: 14px; margin-left: 14px; }
.eng11 { width: 30px; text-align: center; margin-left: 11px; }
.wifi, .spk, .bat { width: 14px; height: 12px; }
.wifi { margin-left: 9px; } .spk { margin-left: 6px; } .bat { margin-left: 6px; }
.clk11 { width: 48px; text-align: right; margin-left: 6px; }
.bell { width: 12px; height: 14px; margin-left: 8px; }
```
